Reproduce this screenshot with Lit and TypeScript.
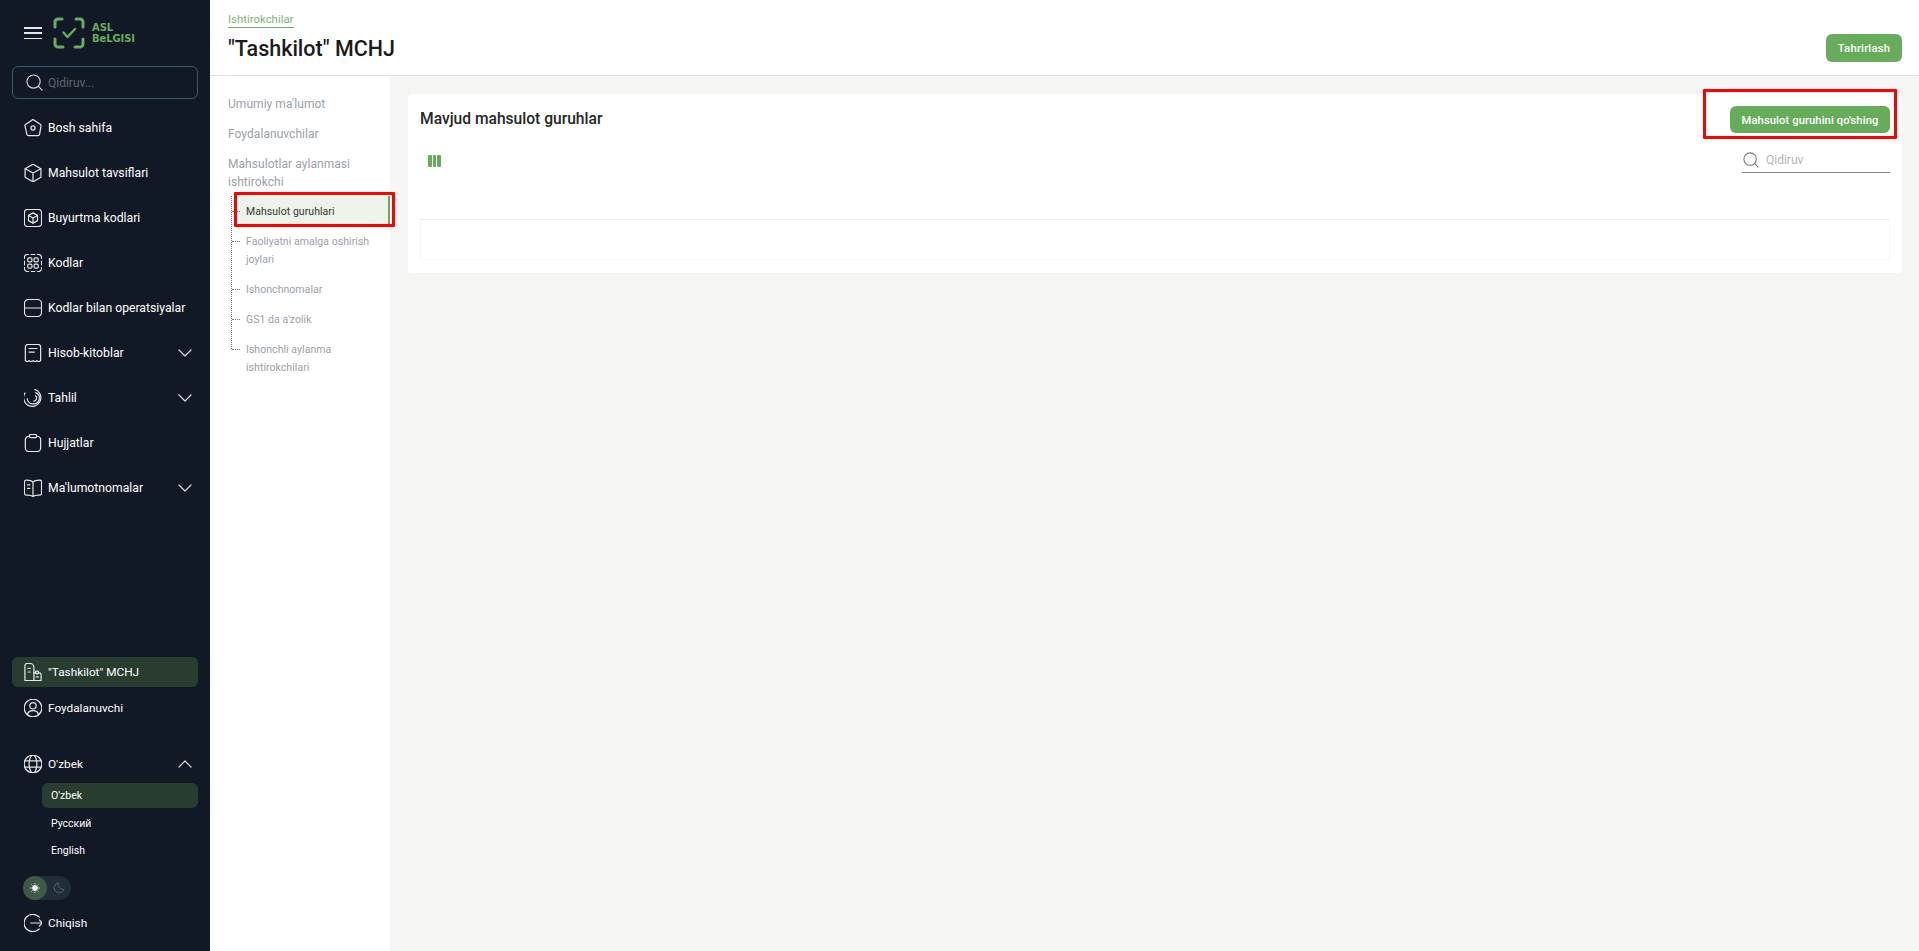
import { LitElement, html, css, svg } from "lit";
import { customElement } from "lit/decorators.js";

const icon = (body: unknown, size = 18) =>
  html`<svg class="ic" width=${size} height=${size} viewBox="2 2 20 20" fill="none" stroke="currentColor" stroke-width="1.35" stroke-linecap="round" stroke-linejoin="round">${body}</svg>`;

const chevDown = html`<svg class="chev" width="14" height="8" viewBox="0 0 14 8" fill="none" stroke="currentColor" stroke-width="1.2" stroke-linecap="round" stroke-linejoin="round"><path d="M1 1l6 6 6-6" /></svg>`;
const chevUp = html`<svg class="chev" width="14" height="8" viewBox="0 0 14 8" fill="none" stroke="currentColor" stroke-width="1.2" stroke-linecap="round" stroke-linejoin="round"><path d="M1 7l6-6 6 6" /></svg>`;
const searchIcon = html`<svg viewBox="0 0 18 18" fill="none" stroke="currentColor" stroke-width="1.2" stroke-linecap="round"><circle cx="8" cy="8" r="7" /><path d="M13.2 13.2l3.8 3.8" /></svg>`;

const icons = {
  home: svg`<path d="M12 2.500l8.300 5.600c.5.4.7.9.6 1.500l-1.600 9.400c-.1.9-.9 1.500-1.800 1.500H7c-.9 0-1.700-.6-1.800-1.500L3.100 9.600c-.1-.6.1-1.100.6-1.500z"/><circle cx="12" cy="12" r="2.300"/>`,
  box: svg`<path d="M12 2.200l8.800 5v9.600L12 21.800l-8.800-5V7.200z"/><path d="M3.400 7.300L12 12l8.600-4.700M12 12v9.600"/>`,
  orderBox: svg`<path d="M7 2.500H6A3.500 3.500 0 0 0 2.500 6v1M17 2.500h1A3.500 3.500 0 0 1 21.500 6v1M21.500 17v1a3.500 3.500 0 0 1-3.500 3.500H6A3.500 3.500 0 0 1 2.500 18v-1M2.500 7v10M21.500 7v10M7 2.500h10"/><path d="M12 6.300l5 2.800v5.800l-5 2.800-5-2.800V9.100z"/><path d="M7.100 9.200L12 12l4.900-2.800M12 12v5.500"/>`,
  codes: svg`<path d="M2.500 7V6A3.500 3.500 0 0 1 6 2.500h1M17 2.500h1A3.500 3.500 0 0 1 21.500 6v1M21.500 17v1a3.500 3.500 0 0 1-3.500 3.500h-1M7 21.500H6A3.500 3.500 0 0 1 2.500 18v-1M2.500 10v4M21.500 10v4M10 2.500h4M10 21.500h4"/><rect x="6.200" y="6.200" width="4.600" height="4.600" rx="1.300"/><rect x="13.200" y="6.200" width="4.600" height="4.600" rx="1.300"/><rect x="6.200" y="13.200" width="4.600" height="4.600" rx="1.300"/><rect x="13.200" y="13.200" width="4.600" height="4.600" rx="1.300"/>`,
  ops: svg`<path d="M2.500 11.500V7a4.500 4.500 0 0 1 4.500-4.500h10A4.500 4.500 0 0 1 21.500 7v4.500M2.500 13v4a4.500 4.500 0 0 0 4.500 4.500h10a4.500 4.500 0 0 0 4.500-4.500v-4M2.500 12h19"/>`,
  receipt: svg`<path d="M3.500 20.500V5.500a3 3 0 0 1 3-3h11a3 3 0 0 1 3 3v15c-1.400 1.500-2.800 1.500-4.200 0-1.400 1.500-2.900 1.500-4.300 0-1.400 1.500-2.900 1.500-4.300 0-1.400 1.500-2.800 1.500-4.200 0z"/><path d="M7.500 7h9M7.500 11h6"/>`,
  chart: svg`<path d="M14 2.500a9.600 9.600 0 1 1-11 4"/><path d="M15 6a6.500 6.500 0 0 1-3 12.500A6.500 6.500 0 0 1 5.500 13"/><path d="M15 9.500a3.500 3.500 0 0 1-2 6"/>`,
  clip: svg`<path d="M8 4.500H7.500a4 4 0 0 0-4 4V17.500a4 4 0 0 0 4 4h9a4 4 0 0 0 4-4V8.500a4 4 0 0 0-4-4H16"/><rect x="8" y="2.500" width="8" height="3.500" rx="1.500"/>`,
  book: svg`<path d="M12 5.500C10.500 3.800 8 3.200 5 3.200H4.500A2 2 0 0 0 2.500 5.200v12.600a2 2 0 0 0 2 2H6c2.700 0 4.700.5 6 1.700 1.300-1.200 3.300-1.700 6-1.700h1.500a2 2 0 0 0 2-2V5.200a2 2 0 0 0-2-2H19c-3 0-5.500.6-7 2.300zM12 5.500v16"/><path d="M5.800 8.500h2.700M5.800 12.500h2.700"/>`,
  org: svg`<path d="M3 21.500V5a2.500 2.500 0 0 1 2.500-2.500h3A4.500 4.500 0 0 1 13 7v14.500z"/><path d="M6.500 8h2.500M6.500 12h2.500"/><path d="M13 13h2M13 21.500h8v-6.500a2 2 0 0 0-2-2h-1"/><rect x="15" y="11" width="3" height="3" rx=".6" /><path d="M15.500 17.500h2.500"/>`,
  user: svg`<circle cx="12" cy="12" r="9.800"/><circle cx="12" cy="9.500" r="3.500"/><path d="M5.800 19.200c.8-2.700 3.200-4.200 6.200-4.200s5.400 1.500 6.200 4.200"/>`,
  globe: svg`<circle cx="12" cy="12" r="9.800"/><ellipse cx="12" cy="12" rx="4.300" ry="9.800"/><path d="M3 8.500h18M3 15.500h18"/>`,
  logout: svg`<path d="M19 5.500A9.600 9.600 0 0 0 11.500 2.500 9.500 9.500 0 0 0 11.500 21.500 9.600 9.600 0 0 0 19 18.500"/><path d="M9.500 12h13M19 8.500l3.500 3.500-3.500 3.500"/>`,
};

@customElement("app-root")
export class AppRoot extends LitElement {
  static styles = css`
    :host {
      display: flex;
      width: 100%;
      height: 951px;
      overflow: hidden;
      font-family: Roboto, "Noto Sans", sans-serif;
      background: #f5f5f3;
    }
    .side {
      width: 210px;
      flex: none;
      background: #121926;
      color: #fff;
      display: flex;
      flex-direction: column;
      justify-content: space-between;
      padding: 0 12px;
      box-sizing: border-box;
    }
    .brand { display: flex; align-items: center; height: 66px; padding-left: 12px; gap: 11px; }
    .burger { width: 18px; height: 12px; display: flex; flex-direction: column; justify-content: space-between; }
    .burger i { display: block; height: 1.5px; background: #e8e8e8; }
    .logo { display: flex; align-items: center; gap: 7px; color: #66ad5c; }
    .wordmark { font: 700 10px/11.500px "DejaVu Sans", sans-serif; letter-spacing: -.1px; color: #66ad5c; }
    .side-search {
      height: 33px; box-sizing: border-box; border: 1px solid #3c5a6d; border-radius: 6px;
      display: flex; align-items: center; gap: 5px; padding-left: 13px; color: #d5d8dc; font-size: 12px;
    }
    .side-search svg { width: 17px; height: 17px; }
    .side-search span { color: #5f6670; }
    nav { display: flex; flex-direction: column; padding-top: 6px; }
    .item {
      height: 45px; display: flex; align-items: center; gap: 6px; padding-left: 12px;
      font-size: 12.200px; color: #fff; white-space: nowrap;
    }
    .ic { flex: none; color: #e4e6e9; }
    .chev { margin-left: auto; margin-right: 6px; color: #d8dadd; }
    .bottom { display: flex; flex-direction: column; padding-bottom: 13px; }
    .bottom .item { height: 30px; font-size: 11.800px; }
    .pill { background: #283d2f; border-radius: 6px; }
    .gap { margin-top: 6px; }
    .lang { margin-top: 26px; margin-bottom: 4px; }
    .sub { height: 25px; margin-left: 30px; padding-left: 9px; display: flex; align-items: center; font-size: 10.500px; border-radius: 6px; }
    .sub + .sub { margin-top: 2px; }
    .sub.pill { margin-bottom: 1px; }
    .toggle {
      margin: 13px 0 8px 11px; width: 48px; height: 24px; border-radius: 12px; background: #222d3a;
      display: flex; align-items: center; box-sizing: border-box;
    }
    .toggle .sun { width: 24px; height: 24px; border-radius: 50%; background: #3d5a44; display: flex; align-items: center; justify-content: center; color: #fff; }
    .toggle .moon { width: 24px; display: flex; justify-content: center; color: #5a6472; }

    .main { flex: 1; min-width: 0; display: flex; flex-direction: column; }
    header {
      height: 76px; flex: none; box-sizing: border-box; background: #fff; border-bottom: 1px solid #e3e3e3;
      display: flex; justify-content: space-between; align-items: flex-end; padding: 0 17px 12px 18px;
    }
    .crumb { display: inline-block; font-size: 11.400px; line-height: 16px; color: #7fb574; border-bottom: 1px solid #67ac5b; margin-bottom: 7px; }
    h1 { margin: 0; font-size: 21.500px; line-height: 28px; font-weight: 500; color: #1a1a1a; }
    .btn {
      background: #67ac5b; color: #fff; border-radius: 6px; font-weight: 500; display: flex;
      align-items: center; justify-content: center; white-space: nowrap;
    }
    .btn.edit { width: 76px; height: 28px; font-size: 11.300px; margin-bottom: 1px; letter-spacing: .2px; }
    .btn.add { width: 160px; height: 27px; font-size: 11.200px; letter-spacing: .1px; padding-top: 1px; box-sizing: border-box; }
    .body { flex: 1; display: flex; min-height: 0; }
    .subnav { width: 180px; flex: none; background: #fff; padding: 19px 0 0 18px; box-sizing: border-box; font-size: 12px; line-height: 18px; color: #9aa1a9; letter-spacing: .05px; position: relative; }
    .subnav .top { margin-bottom: 12px; }
    .subnav .top.last { margin-bottom: 5px; }
    .tree { position: relative; margin-left: 3px; border-left: 1px dotted #777; padding-left: 8px; font-size: 10.500px; }
    .leaf { position: relative; padding: 7px 6px 4px; margin-bottom: 1px; line-height: 18px; }
    .leaf::before { content: ""; position: absolute; left: -8px; top: 15px; width: 8px; border-top: 1px dotted #777; }
    .leaf.active { background: #ecf3e8; color: #333a33; border-right: 2px solid #67ac5b; }
    .tree-end { position: absolute; left: -1px; bottom: 0; top: 154px; width: 1px; background: #fff; }
    .red { position: absolute; border: 3px solid #ff0000; box-sizing: border-box; pointer-events: none; border-radius: 1px; }
    .red.a { left: 24px; top: 116px; width: 161px; height: 35px; }
    .content { flex: 1; min-width: 0; padding: 18px 17px 0 18px; }
    .card { background: #fff; border-radius: 4px; height: 179px; box-sizing: border-box; padding: 12px 12px 13px 12px; display: flex; flex-direction: column; position: relative; }
    .red.b { right: 5px; top: -5px; width: 194px; height: 50px; }
    .row { display: flex; justify-content: space-between; align-items: center; }
    h2 { margin: 0; font-size: 15.600px; font-weight: 500; color: #262626; line-height: 27px; }
    .tools { margin-top: 16px; height: 24px; }
    .cols { margin-left: 8px; display: flex; gap: 1px; height: 12px; }
    .cols i { width: 3.500px; height: 12px; background: #67ac5b; border-radius: 1px; display: block; }
    .tsearch { width: 148px; height: 24px; box-sizing: border-box; border-bottom: 1px solid #8a8a8a; display: flex; align-items: center; gap: 7px; padding: 0 0 2px 1px; color: #777; font-size: 12px; }
    .tsearch svg { width: 16px; height: 16px; }
    .tsearch span { color: #b0b4b8; }
    .table { height: 41px; flex: none; margin-top: 46px; box-sizing: border-box; border-top: 1px solid #ececec; border-left: 1px solid #f7f7f7; border-right: 1px solid #f7f7f7; border-bottom: 1px solid #f9f9f9; }
  `;

  render() {
    const item = (ic: keyof typeof icons, label: string, chev = false) =>
      html`<div class="item">${icon(icons[ic])}<span>${label}</span>${chev ? chevDown : ""}</div>`;
    return html`
      <aside class="side">
        <div>
          <div class="brand">
            <div class="burger"><i></i><i></i><i></i></div>
            <div class="logo">
              <svg width="32" height="32" viewBox="0 0 32 32" fill="none" stroke="currentColor" stroke-width="3" stroke-linecap="round" stroke-linejoin="round">
                <path d="M9 2H5a3 3 0 0 0-3 3v5M23 2h4a3 3 0 0 1 3 3v5M2 22v5a3 3 0 0 0 3 3h5M30 22v5a3 3 0 0 1-3 3h-5" />
                <path d="M10.500 15.500l4 4.500 7.500-8" stroke-width="2.400" />
              </svg>
              <div class="wordmark">ASL<br />BeLGISI</div>
            </div>
          </div>
          <div class="side-search">${searchIcon}<span>Qidiruv...</span></div>
          <nav>
            ${item("home", "Bosh sahifa")}
            ${item("box", "Mahsulot tavsiflari")}
            ${item("orderBox", "Buyurtma kodlari")}
            ${item("codes", "Kodlar")}
            ${item("ops", "Kodlar bilan operatsiyalar")}
            ${item("receipt", "Hisob-kitoblar", true)}
            ${item("chart", "Tahlil", true)}
            ${item("clip", "Hujjatlar")}
            ${item("book", "Ma'lumotnomalar", true)}
          </nav>
        </div>
        <div class="bottom">
          <div class="item pill">${icon(icons.org)}<span>"Tashkilot" MCHJ</span></div>
          <div class="item gap">${icon(icons.user)}<span>Foydalanuvchi</span></div>
          <div class="item lang">${icon(icons.globe)}<span>O'zbek</span>${chevUp}</div>
          <div class="sub pill">O'zbek</div>
          <div class="sub">Русский</div>
          <div class="sub">English</div>
          <div class="toggle">
            <div class="sun">
              <svg width="10" height="10" viewBox="0 0 10 10" fill="currentColor" stroke="currentColor" stroke-width=".8" stroke-linecap="round"><circle cx="5" cy="5" r="2.500" /><path d="M5 .4v.8M5 8.800v.8M.4 5h.8M8.800 5h.8M1.700 1.700l.6.6M7.700 7.700l.6.6M1.700 8.300l.6-.6M7.700 2.300l.6-.6" /></svg>
            </div>
            <div class="moon">
              <svg width="12" height="12" viewBox="0 0 12 12" fill="none" stroke="currentColor" stroke-width="1" stroke-linecap="round" stroke-linejoin="round"><path d="M5 1a5 5 0 1 0 6 6.500A5.500 5.500 0 0 1 5 1z" /></svg>
            </div>
          </div>
          <div class="item">${icon(icons.logout)}<span>Chiqish</span></div>
        </div>
      </aside>
      <div class="main">
        <header>
          <div>
            <span class="crumb">Ishtirokchilar</span>
            <h1>"Tashkilot" MCHJ</h1>
          </div>
          <div class="btn edit">Tahrirlash</div>
        </header>
        <div class="body">
          <div class="subnav">
            <div class="top">Umumiy ma'lumot</div>
            <div class="top">Foydalanuvchilar</div>
            <div class="top last">Mahsulotlar aylanmasi<br />ishtirokchi</div>
            <div class="tree">
              <div class="leaf active">Mahsulot guruhlari</div>
              <div class="leaf">Faoliyatni amalga oshirish joylari</div>
              <div class="leaf">Ishonchnomalar</div>
              <div class="leaf">GS1 da a'zolik</div>
              <div class="leaf">Ishonchli aylanma ishtirokchilari</div>
              <div class="tree-end"></div>
            </div>
            <div class="red a"></div>
          </div>
          <div class="content">
            <div class="card">
              <div class="row">
                <h2>Mavjud mahsulot guruhlar</h2>
                <div class="btn add">Mahsulot guruhini qo'shing</div>
              </div>
              <div class="row tools">
                <div class="cols"><i></i><i></i><i></i></div>
                <div class="tsearch">${searchIcon}<span>Qidiruv</span></div>
              </div>
              <div class="table"></div>
              <div class="red b"></div>
            </div>
          </div>
        </div>
      </div>
    `;
  }
}
